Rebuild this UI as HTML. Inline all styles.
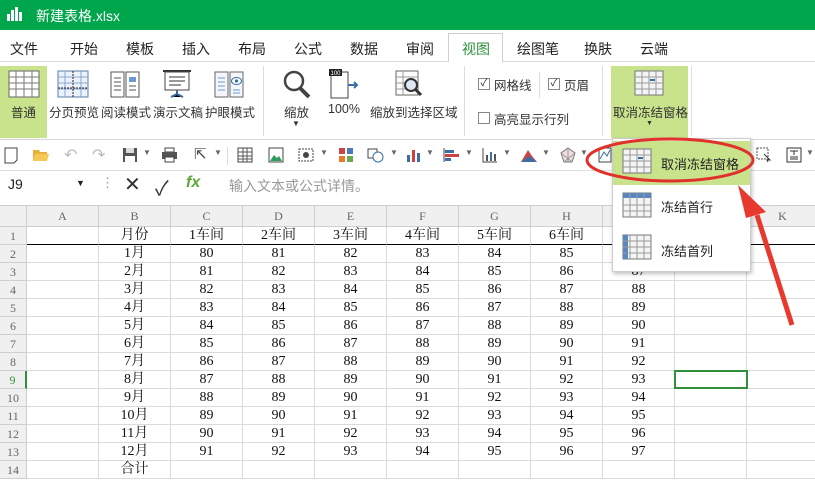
<!DOCTYPE html>
<html><head><meta charset="utf-8"><style>
*{margin:0;padding:0;box-sizing:border-box}
body{width:815px;height:480px;overflow:hidden;position:relative;background:#fff;font-family:"Liberation Sans","Noto Sans CJK SC",sans-serif;font-size:13px;color:#222}
.a{position:absolute}
.title{left:0;top:0;width:815px;height:30px;background:#00a64c;color:#fff;font-size:14px}
.tabs{left:0;top:30px;width:815px;height:32px;background:#fff;border-bottom:1px solid #d8d8d8}
.tab{position:absolute;top:9px;font-size:14px;color:#222}
.ribbon{left:0;top:62px;width:815px;height:78px;background:#fff;border-bottom:1px solid #d8d8d8}
.lbl{position:absolute;font-size:12.5px;color:#333;white-space:nowrap}
.tb{left:0;top:141px;width:815px;height:30px;background:#fff;border-bottom:1px solid #ddd}
.fb{left:0;top:171px;width:815px;height:30px;background:#fff}
.ch{position:absolute;top:205px;height:22px;background:#f0f0f0;border-right:1px solid #cfcfcf;border-bottom:1px solid #cfcfcf;border-top:1px solid #cfcfcf;text-align:center;font-family:"Liberation Serif","Noto Serif CJK SC",serif;font-size:12px;color:#666;line-height:21px}
.rh{position:absolute;left:0;width:27px;height:18px;background:#f0f0f0;border-bottom:1px solid #cfcfcf;border-right:1px solid #cfcfcf;text-align:center;font-family:"Liberation Serif",serif;font-size:12px;color:#666;line-height:18px}
.c{position:absolute;height:18px;border-right:1px solid #dadada;border-bottom:1px solid #dadada;text-align:center;font-family:"Liberation Serif","Noto Serif CJK SC",serif;font-size:14px;line-height:18px;color:#111}
.chk{position:absolute;width:12px;height:12px;border:1px solid #888;background:#fff;font-size:10px;line-height:10px;text-align:center}
</style></head><body>
<div class="a title">
 <svg class="a" style="left:6px;top:6px" width="16" height="16"><rect x="1" y="8" width="3" height="7" fill="#fff"/><rect x="5" y="4" width="3" height="11" fill="#fff"/><rect x="9" y="1" width="3" height="14" fill="#fff"/><rect x="13" y="6" width="3" height="9" fill="#fff"/></svg>
 <span class="a" style="left:36px;top:6px">新建表格.xlsx</span>
</div>
<div class="a tabs">
 <span class="tab" style="left:10px">文件</span><span class="tab" style="left:70px">开始</span><span class="tab" style="left:126px">模板</span><span class="tab" style="left:182px">插入</span><span class="tab" style="left:238px">布局</span><span class="tab" style="left:294px">公式</span><span class="tab" style="left:350px">数据</span><span class="tab" style="left:406px">审阅</span>
 <div class="a" style="left:448px;top:3px;width:55px;height:30px;background:#fff;border:1px solid #d0d0d0;border-bottom:none"></div>
 <span class="tab" style="left:462px;color:#2f8f3a">视图</span><span class="tab" style="left:517px">绘图笔</span><span class="tab" style="left:584px">换肤</span><span class="tab" style="left:640px">云端</span>
</div>
<div class="a ribbon">
 <div class="a" style="left:0;top:4px;width:47px;height:72px;background:#c9e38d"></div>
 <svg class="a" style="left:8px;top:6px" width="32" height="32"><rect x="1" y="3" width="30" height="26" fill="#fff" stroke="#666"/><path d="M1 9H31M1 15H31M1 21H31M8 3V29M16 3V29M24 3V29" stroke="#777"/></svg>
 <span class="lbl" style="left:11px;top:40px">普通</span>
 <svg class="a" style="left:57px;top:6px" width="32" height="32"><rect x="1" y="3" width="30" height="26" fill="#eaf2fb" stroke="#5a7fa8"/><path d="M1 9H31M1 15H31M1 21H31M8 3V29M24 3V29" stroke="#8aa8c8"/><path d="M16 3V29M1 20H31" stroke="#222" stroke-dasharray="2 1"/></svg>
 <span class="lbl" style="left:49px;top:40px">分页预览</span>
 <svg class="a" style="left:109px;top:6px" width="32" height="32"><path d="M2 4H15V29H2ZM17 4H30V29H17Z" fill="#fff" stroke="#555"/><path d="M5 10H12M5 14H12M5 18H12M5 22H12M20 18H27M20 22H27" stroke="#555"/><rect x="20" y="9" width="7" height="5" fill="#6a9ad0"/></svg>
 <span class="lbl" style="left:101px;top:40px">阅读模式</span>
 <svg class="a" style="left:161px;top:6px" width="32" height="32"><path d="M2 3H30" stroke="#333" stroke-width="2"/><rect x="4" y="4" width="24" height="18" fill="#fff" stroke="#444"/><path d="M8 9H24M8 13H24M8 17H20" stroke="#333"/><path d="M16 22V27M10 29L16 26L22 29" stroke="#3d6a9a" stroke-width="2"/></svg>
 <span class="lbl" style="left:153px;top:40px">演示文稿</span>
 <svg class="a" style="left:213px;top:6px" width="32" height="32"><path d="M2 4H15V29H2ZM17 4H30V29H17Z" fill="#f3f6fa" stroke="#666"/><path d="M5 10H12M5 14H12M5 18H12M5 22H12M20 22H27M20 25H27" stroke="#6a9ad0"/><ellipse cx="23.5" cy="13" rx="5" ry="3.5" fill="#fff" stroke="#3a6ea5"/><circle cx="23.5" cy="13" r="1.6" fill="#3a6ea5"/></svg>
 <span class="lbl" style="left:205px;top:40px">护眼模式</span>
 <div class="a" style="left:263px;top:4px;width:1px;height:70px;background:#ddd"></div>
 <svg class="a" style="left:280px;top:6px" width="32" height="32"><circle cx="14" cy="13" r="9" fill="none" stroke="#444" stroke-width="2.5"/><path d="M20 20L29 29" stroke="#444" stroke-width="4"/></svg>
 <span class="lbl" style="left:284px;top:40px">缩放</span><span class="lbl" style="left:292px;top:57px;font-size:8px">▼</span>
 <svg class="a" style="left:328px;top:6px" width="32" height="32"><path d="M3 4H20V30H3Z" fill="#fff" stroke="#444"/><rect x="1" y="1" width="13" height="7" fill="#222"/><text x="2.5" y="7" font-size="6" fill="#fff" font-family="Liberation Sans">100</text><path d="M20 17H29M26 14L29 17L26 20" stroke="#3a6ea5" stroke-width="2" fill="none"/></svg>
 <span class="lbl" style="left:328px;top:40px">100%</span>
 <svg class="a" style="left:393px;top:6px" width="32" height="32"><rect x="3" y="3" width="22" height="24" fill="#fff" stroke="#666"/><path d="M3 9H25M3 15H25M3 21H25M10 3V27" stroke="#999"/><circle cx="18" cy="17" r="6" fill="#dde8f4" stroke="#333" stroke-width="2"/><path d="M22 21L28 27" stroke="#333" stroke-width="3"/></svg>
 <span class="lbl" style="left:370px;top:40px">缩放到选择区域</span>
 <div class="a" style="left:464px;top:4px;width:1px;height:70px;background:#ddd"></div>
 <div class="chk" style="left:478px;top:16px">✓</div><span class="lbl" style="left:494px;top:13px">网格线</span>
 <div class="a" style="left:539px;top:10px;width:1px;height:26px;background:#ddd"></div>
 <div class="chk" style="left:548px;top:16px">✓</div><span class="lbl" style="left:564px;top:13px">页眉</span>
 <div class="chk" style="left:478px;top:50px"></div><span class="lbl" style="left:494px;top:47px">高亮显示行列</span>
 <div class="a" style="left:602px;top:4px;width:1px;height:70px;background:#ddd"></div>
 <div class="a" style="left:611px;top:4px;width:77px;height:72px;background:#c9e38d"></div>
 <svg class="a" style="left:633px;top:7px" width="32" height="30"><rect x="2" y="2" width="28" height="24" fill="#f4f4f4" stroke="#777"/><path d="M2 8H30M2 14H30M2 20H30M9 2V26M16 2V26M23 2V26" stroke="#999"/><rect x="17" y="10" width="5" height="2" fill="#3a6ea5"/></svg>
 <span class="lbl" style="left:613px;top:40px">取消冻结窗格</span><span class="lbl" style="left:646px;top:58px;font-size:7px">▼</span>
 <div class="a" style="left:691px;top:4px;width:1px;height:70px;background:#ddd"></div>
</div>
<div class="a tb">
 <svg class="a" style="left:4px;top:6px" width="14" height="17"><path d="M1 1H13V13L10 16H1Z" fill="#fff" stroke="#444"/></svg>
 <svg class="a" style="left:32px;top:7px" width="18" height="15"><path d="M1 2H7L8 4H15V13H1Z" fill="#e8b13a"/><path d="M3 6H17L15 13H1Z" fill="#f6c956"/></svg>
 <span class="a" style="left:64px;top:4px;color:#bbb;font-size:16px">↶</span><span class="a" style="left:92px;top:4px;color:#bbb;font-size:16px">↷</span>
 <svg class="a" style="left:122px;top:6px" width="16" height="16"><rect x="1" y="1" width="14" height="14" fill="#555"/><rect x="4" y="1" width="8" height="5" fill="#ddd"/><rect x="3" y="9" width="10" height="6" fill="#fff"/></svg><span class="a" style="left:143px;top:7px;font-size:8px;color:#666">▼</span>
 <svg class="a" style="left:161px;top:6px" width="17" height="16"><rect x="4" y="1" width="9" height="4" fill="#fff" stroke="#444"/><rect x="1" y="5" width="15" height="7" fill="#555"/><rect x="4" y="10" width="9" height="5" fill="#fff" stroke="#444"/></svg>
 <span class="a" style="left:194px;top:4px;font-size:15px;color:#444">⇱</span><span class="a" style="left:214px;top:7px;font-size:8px;color:#666">▼</span>
 <div class="a" style="left:227px;top:6px;width:1px;height:18px;background:#ddd"></div>
 <svg class="a" style="left:237px;top:6px" width="16" height="16"><rect x="1" y="1" width="14" height="14" fill="#fff" stroke="#444"/><path d="M1 5H15M1 9H15M1 12H15M6 1V15M10 1V15" stroke="#555"/></svg>
 <svg class="a" style="left:268px;top:6px" width="16" height="16"><rect x="1" y="1" width="14" height="14" fill="#fff" stroke="#444"/><path d="M2 14L6 8L9 11L11 9L14 14Z" fill="#2e9c5c"/></svg>
 <svg class="a" style="left:298px;top:6px" width="16" height="16"><rect x="1" y="2" width="14" height="12" fill="none" stroke="#444" stroke-dasharray="2 1"/><circle cx="8" cy="8" r="3" fill="#444"/></svg><span class="a" style="left:320px;top:7px;font-size:8px;color:#666">▼</span>
 <svg class="a" style="left:338px;top:6px" width="16" height="16"><rect x="1" y="1" width="6" height="6" fill="#c44"/><rect x="9" y="1" width="6" height="6" fill="#4a7ab8"/><rect x="1" y="9" width="6" height="6" fill="#e87a2a"/><rect x="9" y="9" width="6" height="6" fill="#6aa84f"/></svg>
 <svg class="a" style="left:367px;top:6px" width="18" height="16"><rect x="1" y="2" width="9" height="9" fill="none" stroke="#444"/><circle cx="11" cy="10" r="5" fill="#fff" stroke="#3a6ea5"/></svg><span class="a" style="left:390px;top:7px;font-size:8px;color:#666">▼</span>
 <svg class="a" style="left:406px;top:6px" width="16" height="16"><rect x="1" y="8" width="3" height="7" fill="#3a6ea5"/><rect x="6" y="3" width="3" height="12" fill="#c44"/><rect x="11" y="6" width="3" height="9" fill="#3a6ea5"/></svg><span class="a" style="left:426px;top:7px;font-size:8px;color:#666">▼</span>
 <svg class="a" style="left:443px;top:6px" width="18" height="16"><path d="M1 1V15" stroke="#444"/><rect x="2" y="3" width="9" height="3" fill="#3a6ea5"/><rect x="2" y="7" width="14" height="3" fill="#c44"/><rect x="2" y="11" width="6" height="3" fill="#3a6ea5"/></svg><span class="a" style="left:465px;top:7px;font-size:8px;color:#666">▼</span>
 <svg class="a" style="left:482px;top:6px" width="16" height="16"><path d="M1 1V15H15" stroke="#444" fill="none"/><rect x="4" y="8" width="2" height="6" fill="#555"/><rect x="8" y="5" width="2" height="9" fill="#3a6ea5"/><rect x="12" y="7" width="2" height="7" fill="#555"/></svg><span class="a" style="left:503px;top:7px;font-size:8px;color:#666">▼</span>
 <svg class="a" style="left:520px;top:6px" width="18" height="16"><path d="M1 15L8 3L12 9L17 15Z" fill="#c44"/><path d="M1 15L9 9L17 15Z" fill="#3a6ea5"/></svg><span class="a" style="left:542px;top:7px;font-size:8px;color:#666">▼</span>
 <svg class="a" style="left:560px;top:6px" width="16" height="16"><path d="M8 1L15 6L12 15H4L1 6Z" fill="#f1dede" stroke="#777"/><path d="M8 1V15M1 6L12 15M15 6L4 15" stroke="#999"/></svg><span class="a" style="left:580px;top:7px;font-size:8px;color:#666">▼</span>
 <svg class="a" style="left:598px;top:6px" width="14" height="16"><rect x="1" y="1" width="12" height="14" fill="none" stroke="#444"/><path d="M2 12L6 5L9 9L12 3" stroke="#3a6ea5" fill="none"/></svg>
 <svg class="a" style="left:756px;top:6px" width="16" height="16"><rect x="1" y="1" width="11" height="11" fill="none" stroke="#555" stroke-dasharray="2 1"/><path d="M8 7L14 13L11 13L12 15" stroke="#333" fill="none"/></svg>
 <svg class="a" style="left:786px;top:6px" width="16" height="16"><rect x="1" y="1" width="14" height="14" fill="#fff" stroke="#333"/><path d="M4 4H12M8 4V8M4 10H12M4 12H12" stroke="#333"/></svg><span class="a" style="left:806px;top:7px;font-size:8px;color:#666">▼</span>
</div>
<div class="a fb">
 <span class="a" style="left:8px;top:5px;font-size:14px">J9</span>
 <span class="a" style="left:76px;top:7px;font-size:9px">▼</span>
 <span class="a" style="left:101px;top:4px;color:#999">⋮</span>
 <span class="a" style="left:124px;top:1px;font-size:20px;color:#333">✕</span>
 <span class="a" style="left:155px;top:1px;font-size:20px;color:#333">✓</span>
 <span class="a" style="left:186px;top:3px;font-size:16px;color:#5aa83a;font-style:italic;font-weight:bold">fx</span>
 <span class="a" style="left:229px;top:5px;font-size:14px;color:#999">输入文本或公式详情。</span>
</div>
<div id="g"></div>
<script>
var cols=["A","B","C","D","E","F","G","H","I","J","K"],h="";
h+='<div class="ch" style="left:0;width:27px"></div>';
for(var i=0;i<11;i++){var x=27+i*72;h+='<div class="ch" style="left:'+x+'px;width:72px">'+cols[i]+'</div>';}
for(var r=1;r<=14;r++){var y=227+(r-1)*18;h+='<div class="rh" style="top:'+y+'px;'+(r==9?'color:#2f8f3a;border-right:2px solid #2f8f3a':'')+'">'+r+'</div>';
 for(var i=0;i<11;i++){var x=27+i*72,t="";
  if(r==1){if(i==1)t="月份";else if(i>=2&&i<=8)t=(i-1)+"车间";}
  else if(r<=13){if(i==1)t=(r-1)+"月";else if(i>=2&&i<=8)t=80+(r-2)+(i-2);}
  else if(i==1)t="合计";
  h+='<div class="c" style="left:'+x+'px;top:'+y+'px;width:72px;'+(r==1?'border-bottom:1px solid #000':'')+'">'+t+'</div>';}}
h+='<div class="a" style="left:674px;top:370px;width:74px;height:19px;border:2px solid #2f8f3a"></div>';
document.getElementById("g").innerHTML=h;
</script>
<div class="a" style="left:612px;top:138px;width:139px;height:134px;background:#fff;border:1px solid #ccc;box-shadow:1px 2px 4px rgba(0,0,0,.25)">
 <div class="a" style="left:0;top:2px;width:137px;height:44px;background:#c9e38d"></div>
 <svg class="a" style="left:9px;top:8px" width="32" height="32"><rect x="1" y="2" width="28" height="24" fill="#f4f4f4" stroke="#777"/><path d="M1 8H29M1 14H29M1 20H29M8 2V26M15 2V26M22 2V26" stroke="#999"/><rect x="16" y="10" width="5" height="2" fill="#3a6ea5"/></svg>
 <span class="a" style="left:48px;top:15px;font-size:13px">取消冻结窗格</span>
 <svg class="a" style="left:9px;top:52px" width="32" height="32"><rect x="1" y="2" width="28" height="24" fill="#f4f4f4" stroke="#777"/><rect x="1" y="2" width="28" height="5" fill="#5a86c0"/><path d="M1 14H29M1 20H29M8 2V26M15 2V26M22 2V26" stroke="#999"/></svg>
 <span class="a" style="left:48px;top:58px;font-size:13px">冻结首行</span>
 <svg class="a" style="left:9px;top:94px" width="32" height="32"><rect x="1" y="2" width="28" height="24" fill="#f4f4f4" stroke="#777"/><rect x="1" y="2" width="5" height="24" fill="#5a86c0"/><path d="M1 8H29M1 14H29M1 20H29M8 2V26M15 2V26M22 2V26" stroke="#999"/></svg>
 <span class="a" style="left:48px;top:102px;font-size:13px">冻结首列</span>
</div>
<svg class="a" style="left:0;top:0" width="815" height="480">
 <ellipse cx="670" cy="160" rx="83" ry="21" fill="none" stroke="#e0312d" stroke-width="3"/>
 <path d="M792 325L757 215" stroke="#e8392e" stroke-width="5"/>
 <path d="M738 185L766 212L746 218Z" fill="#e8392e"/>
</svg>
</body></html>
